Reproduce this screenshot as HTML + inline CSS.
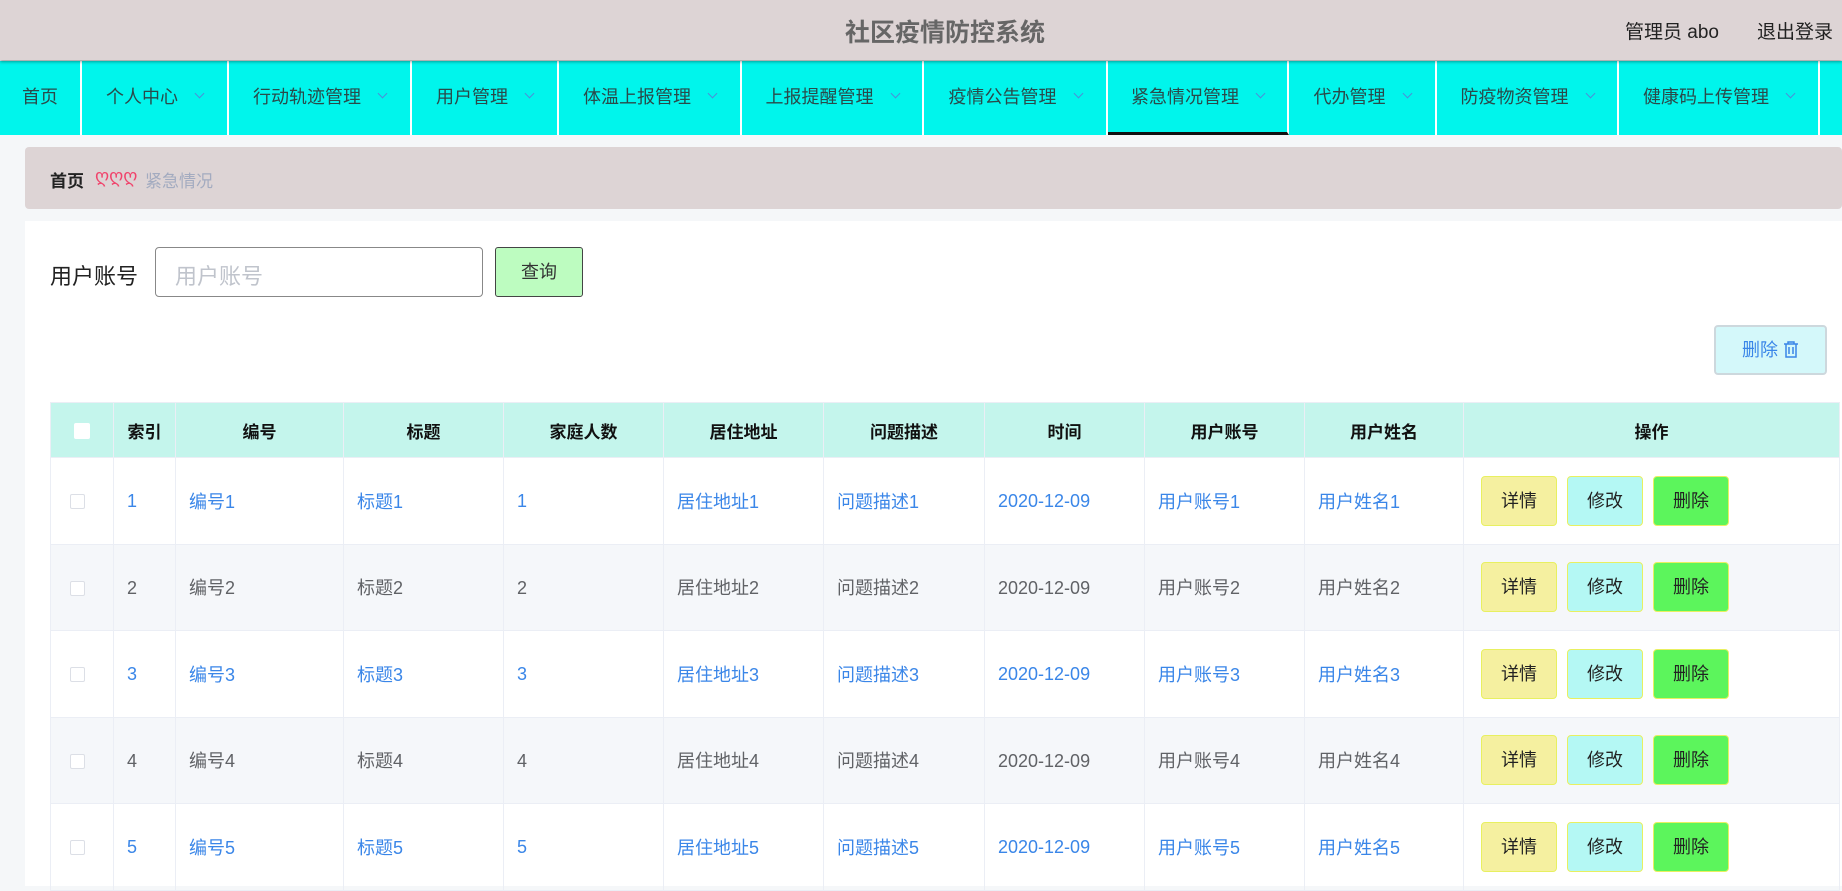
<!DOCTYPE html>
<html><head><meta charset="utf-8">
<style>
*{margin:0;padding:0;box-sizing:border-box}
body{width:1842px;height:886px;overflow:hidden;background:#f5f7f9;font-family:"Liberation Sans","Noto Sans CJK SC",sans-serif;position:relative}
.hdr{position:absolute;left:0;top:0;width:1842px;height:60px;background:#ddd4d5;box-shadow:0 2px 3px rgba(0,0,0,.35);z-index:2}
.title{position:absolute;left:0;width:1890px;text-align:center;top:13px;font-size:25px;font-weight:bold;color:#666}
.ru{position:absolute;top:17px;font-size:19px;color:#222}
.nav{position:absolute;left:0;top:61px;width:1842px;height:74px;background:#00f5ec}
.ni{position:absolute;top:0;height:74px;border-right:2px solid #fff;font-size:18px;color:#2a4a4a;text-align:center;line-height:72px;white-space:nowrap}
.ni .ch{display:inline-block;width:7px;height:7px;border-right:1px solid #4a8fd8;border-bottom:1px solid #4a8fd8;transform:rotate(45deg);margin-left:18px;position:relative;top:-6px}
.ni.act{border-bottom:3px solid #111}
.bc{position:absolute;left:25px;top:147px;width:1817px;height:62px;background:#ddd4d5;border-radius:4px}
.bc span{position:absolute;top:20px;font-size:17px}
.panel{position:absolute;left:25px;top:221px;width:1817px;height:665px;background:#fff}
.lbl{position:absolute;left:50px;top:259px;font-size:22px;color:#222}
.inp{position:absolute;left:155px;top:247px;width:328px;height:50px;border:1px solid #888;border-radius:4px;font-size:22px;color:#c0c4cc;padding:11px 19px}
.qb{position:absolute;left:495px;top:247px;width:88px;height:50px;background:#bdfcc0;border:1px solid #444;border-radius:3px;font-size:18px;text-align:center;line-height:48px;color:#333}
.db{position:absolute;left:1714px;top:325px;width:113px;height:50px;background:#d4f8fa;border:2px solid #cdd8dd;border-radius:4px;color:#3a86e8;font-size:18px;text-align:center;line-height:46px}
table{position:absolute;left:50px;top:402px;border-collapse:collapse;table-layout:fixed;width:1790px}
td,th{border:1px solid #ebeef5;font-size:18px;text-align:left;padding-left:13px;white-space:nowrap}
th{height:55px;background:#c4f5ec;font-size:17px;font-weight:bold;color:#111;text-align:center;padding:0;border-color:#c4f5ec #dff 0 #dff}
td{height:86.5px;color:#3a86e8}
td.n{padding-top:2px}
tr.e td{background:#f5f7fa;color:#606266}
.cb{display:inline-block;width:15px;height:15px;border:1px solid #dcdfe6;border-radius:2px;background:#fff;vertical-align:middle;margin-left:6px}
th .cb{width:16px;height:16px;border:none;margin-left:0}
.b{display:inline-block;width:76px;height:50px;border-radius:4px;border:1px solid #e8f060;text-align:center;line-height:48px;color:#222;font-size:18px;margin-right:10px;vertical-align:middle}
</style></head><body>
<div class="hdr"><div class="title">社区疫情防控系统</div><div class="ru" style="left:1625px">管理员 abo</div><div class="ru" style="left:1757px">退出登录</div></div>
<div class="nav">
<div class="ni" style="left:0;width:82px">首页</div>
<div class="ni" style="left:82px;width:147px">个人中心<i class="ch"></i></div>
<div class="ni" style="left:229px;width:183px">行动轨迹管理<i class="ch"></i></div>
<div class="ni" style="left:412px;width:147px">用户管理<i class="ch"></i></div>
<div class="ni" style="left:559px;width:183px">体温上报管理<i class="ch"></i></div>
<div class="ni" style="left:742px;width:182px">上报提醒管理<i class="ch"></i></div>
<div class="ni" style="left:924px;width:184px">疫情公告管理<i class="ch"></i></div>
<div class="ni act" style="left:1108px;width:181px">紧急情况管理<i class="ch"></i></div>
<div class="ni" style="left:1289px;width:148px">代办管理<i class="ch"></i></div>
<div class="ni" style="left:1437px;width:182px">防疫物资管理<i class="ch"></i></div>
<div class="ni" style="left:1619px;width:201px">健康码上传管理<i class="ch"></i></div>
</div>
<div class="bc"><span style="left:25px;font-weight:bold;color:#222">首页</span><span style="left:70px;color:#f0446c;font-family:'DejaVu Sans',sans-serif;font-size:18px;top:19px">ღღღ</span><span style="left:120px;color:#a3abc0">紧急情况</span></div>
<div class="panel"></div>
<div class="lbl">用户账号</div>
<div class="inp">用户账号</div>
<div class="qb">查询</div>
<div class="db">删除 <svg width="16" height="17" viewBox="0 0 16 17" style="vertical-align:-2px"><path d="M1 3h14M5 3V1h6v2M3 3v13h10V3M6 6v7M10 6v7" fill="none" stroke="#3a86e8" stroke-width="1.5"/></svg></div>
<table>
<colgroup><col style="width:63px"><col style="width:62px"><col style="width:168px"><col style="width:160px"><col style="width:160px"><col style="width:160px"><col style="width:161px"><col style="width:160px"><col style="width:160px"><col style="width:159px"><col></colgroup>
<tr><th><span class="cb"></span></th><th>索引</th><th>编号</th><th>标题</th><th>家庭人数</th><th>居住地址</th><th>问题描述</th><th>时间</th><th>用户账号</th><th>用户姓名</th><th>操作</th></tr>
<tr><td><span class="cb"></span></td><td class="n">1</td><td>编号1</td><td>标题1</td><td class="n">1</td><td>居住地址1</td><td>问题描述1</td><td class="n">2020-12-09</td><td>用户账号1</td><td>用户姓名1</td><td style="padding-left:17px"><span class="b" style="background:#f5f0a0">详情</span><span class="b" style="background:#b4f8f4">修改</span><span class="b" style="background:#5cf55c">删除</span></td></tr>
<tr class="e"><td><span class="cb"></span></td><td class="n">2</td><td>编号2</td><td>标题2</td><td class="n">2</td><td>居住地址2</td><td>问题描述2</td><td class="n">2020-12-09</td><td>用户账号2</td><td>用户姓名2</td><td style="padding-left:17px"><span class="b" style="background:#f5f0a0">详情</span><span class="b" style="background:#b4f8f4">修改</span><span class="b" style="background:#5cf55c">删除</span></td></tr>
<tr><td><span class="cb"></span></td><td class="n">3</td><td>编号3</td><td>标题3</td><td class="n">3</td><td>居住地址3</td><td>问题描述3</td><td class="n">2020-12-09</td><td>用户账号3</td><td>用户姓名3</td><td style="padding-left:17px"><span class="b" style="background:#f5f0a0">详情</span><span class="b" style="background:#b4f8f4">修改</span><span class="b" style="background:#5cf55c">删除</span></td></tr>
<tr class="e"><td><span class="cb"></span></td><td class="n">4</td><td>编号4</td><td>标题4</td><td class="n">4</td><td>居住地址4</td><td>问题描述4</td><td class="n">2020-12-09</td><td>用户账号4</td><td>用户姓名4</td><td style="padding-left:17px"><span class="b" style="background:#f5f0a0">详情</span><span class="b" style="background:#b4f8f4">修改</span><span class="b" style="background:#5cf55c">删除</span></td></tr>
<tr><td><span class="cb"></span></td><td class="n">5</td><td>编号5</td><td>标题5</td><td class="n">5</td><td>居住地址5</td><td>问题描述5</td><td class="n">2020-12-09</td><td>用户账号5</td><td>用户姓名5</td><td style="padding-left:17px"><span class="b" style="background:#f5f0a0">详情</span><span class="b" style="background:#b4f8f4">修改</span><span class="b" style="background:#5cf55c">删除</span></td></tr>
</table>
</body></html>
